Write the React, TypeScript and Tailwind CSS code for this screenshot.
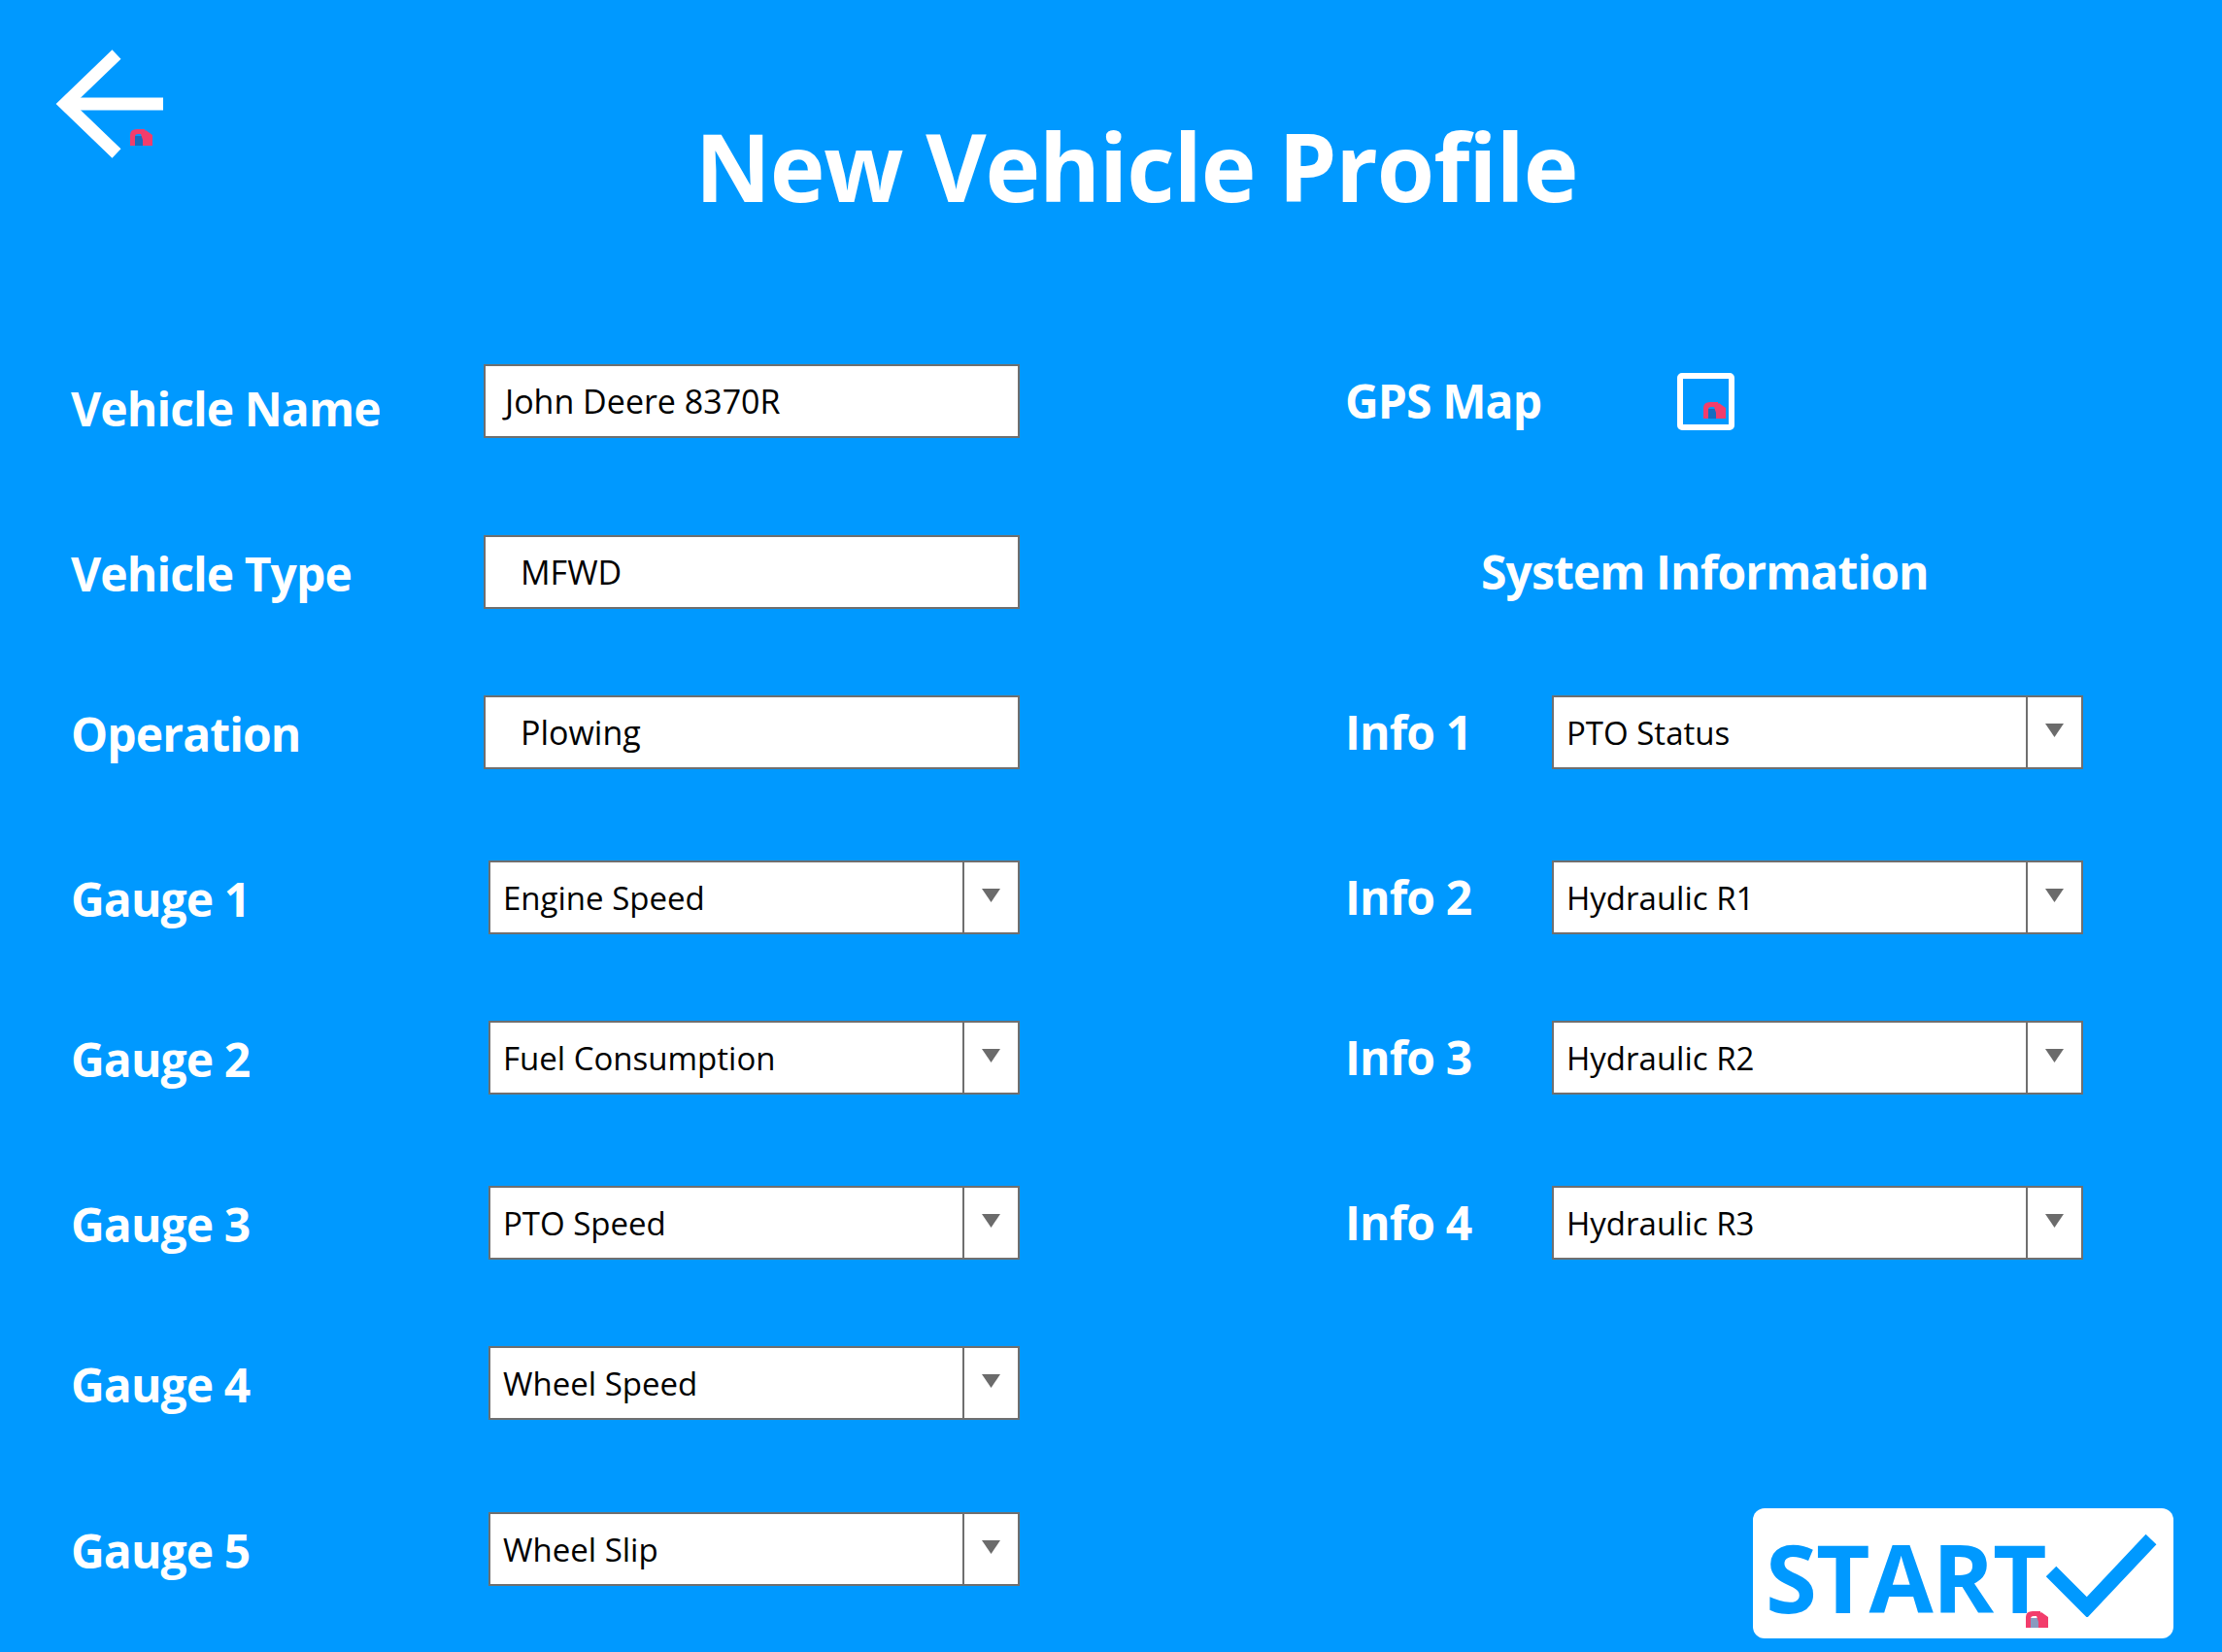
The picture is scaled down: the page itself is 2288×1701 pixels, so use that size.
import React from "react";

function Glyph({ className }: { className: string }) {
  return (
    <svg className={className} width="24" height="19" viewBox="0 0 24 19">
      <rect x="5" y="8" width="8" height="10" fill="#28478c" opacity="0.55" />
      <path d="M0 18 L0 7 Q0 1 7 1 L15 1 L15 6 L8 6 Q5 6 5 9 L5 18 Z" fill="#f23d6c" />
      <polygon points="11,6 16,2 23,7 23,18 13,18 13,12" fill="#f23d6c" />
    </svg>
  );
}

function TextBox({ value, padClass }: { value: string; padClass: string }) {
  return (
    <div className={`shrink-0 w-[552px] h-[76px] bg-white border-2 border-[#6f6f6f] flex items-center text-[34px] leading-none text-black ${padClass}`}>
      {value}
    </div>
  );
}

function Combo({ value, className }: { value: string; className: string }) {
  return (
    <div className={`shrink-0 flex h-[76px] w-[547px] bg-white border-2 border-[#6f6f6f] ${className}`}>
      <div className="flex-1 flex items-center pl-[13px] text-[33px] text-black leading-none">{value}</div>
      <div className="w-[57px] border-l-2 border-[#6f6f6f] flex items-start justify-center pt-[27px]">
        <svg width="19" height="14" viewBox="0 0 19 14">
          <polygon points="0,0 19,0 9.5,14" fill="#6b6b6b" />
        </svg>
      </div>
    </div>
  );
}

const label = "shrink-0 text-[48px] font-bold text-white leading-none tracking-[-0.9px]";

export default function App() {
  return (
    <div className="w-[2288px] h-[1701px] bg-[#0099ff] font-['Open_Sans',sans-serif] overflow-hidden flex flex-col">
      <div className="h-[375px] shrink-0 grid grid-cols-[200px_1fr_148px] items-start">
        <div className="relative ml-[52px] mt-[50px] w-[120px] h-[115px]">
          <svg width="120" height="115" viewBox="0 0 120 115">
            <polyline points="68,6 15,57 68,108" fill="none" stroke="white" strokeWidth="13" strokeLinejoin="miter" />
            <line x1="15" y1="57" x2="116" y2="57" stroke="white" strokeWidth="13" />
          </svg>
          <Glyph className="absolute left-[82px] top-[82px]" />
        </div>
        <h1 className="mt-[123px] text-center text-[96px] font-bold text-white leading-none tracking-[-1.1px]">New Vehicle Profile</h1>
        <div />
      </div>

      <div className="pl-[73px] flex flex-col">
        {/* Row 1 */}
        <div className="flex h-[76px] items-center">
          <div className={`${label} w-[425px] pt-[16px]`}>Vehicle Name</div>
          <TextBox value="John Deere 8370R" padClass="pl-[20px]" />
          <div className="shrink-0 w-[335px]" />
          <div className={`${label} w-[342px]`}>GPS Map</div>
          <div className="relative shrink-0 w-[59px] h-[59px] border-[6px] border-white rounded-[5px]">
            <Glyph className="absolute left-[21px] top-[23px]" />
          </div>
        </div>

        {/* Row 2 */}
        <div className="flex h-[76px] items-center mt-[100px]">
          <div className={`${label} w-[425px] pt-[4px]`}>Vehicle Type</div>
          <TextBox value="MFWD" padClass="pl-[36px]" />
          <div className="shrink-0 w-[335px]" />
          <div className={`${label} pl-[140px]`}>System Information</div>
        </div>

        {/* Row 3 */}
        <div className="flex h-[76px] items-center mt-[89px]">
          <div className={`${label} w-[425px] pt-[4px]`}>Operation</div>
          <TextBox value="Plowing" padClass="pl-[36px]" />
          <div className="shrink-0 w-[335px]" />
          <div className={`${label} w-[213px]`}>Info 1</div>
          <Combo value="PTO Status" className="" />
        </div>

        {/* Row 4 */}
        <div className="flex h-[76px] items-center mt-[94px]">
          <div className={`${label} w-[425px] pt-[4px]`}>Gauge 1</div>
          <Combo value="Engine Speed" className="ml-[5px]" />
          <div className="shrink-0 w-[335px]" />
          <div className={`${label} w-[213px]`}>Info 2</div>
          <Combo value="Hydraulic R1" className="" />
        </div>

        {/* Row 5 */}
        <div className="flex h-[76px] items-center mt-[89px]">
          <div className={`${label} w-[425px] pt-[4px]`}>Gauge 2</div>
          <Combo value="Fuel Consumption" className="ml-[5px]" />
          <div className="shrink-0 w-[335px]" />
          <div className={`${label} w-[213px]`}>Info 3</div>
          <Combo value="Hydraulic R2" className="" />
        </div>

        {/* Row 6 */}
        <div className="flex h-[76px] items-center mt-[94px]">
          <div className={`${label} w-[425px] pt-[4px]`}>Gauge 3</div>
          <Combo value="PTO Speed" className="ml-[5px]" />
          <div className="shrink-0 w-[335px]" />
          <div className={`${label} w-[213px]`}>Info 4</div>
          <Combo value="Hydraulic R3" className="" />
        </div>

        {/* Row 7 */}
        <div className="flex h-[76px] items-center mt-[89px]">
          <div className={`${label} w-[425px] pt-[4px]`}>Gauge 4</div>
          <Combo value="Wheel Speed" className="ml-[5px]" />
        </div>

        {/* Row 8 */}
        <div className="flex h-[76px] items-start mt-[95px]">
          <div className={`${label} w-[425px] self-center pt-[4px]`}>Gauge 5</div>
          <Combo value="Wheel Slip" className="ml-[5px]" />
          <div className="shrink-0 w-[755px]" />
          <div className="relative shrink-0 -mt-[4px] w-[433px] h-[134px] bg-white rounded-[12px] flex items-center pl-[13px]">
            <span className="text-[96px] font-bold text-[#0099ff] leading-none pt-[8px] tracking-[-1px]">START</span>
            <svg className="shrink-0" width="115" height="90" viewBox="0 0 115 90">
              <polyline points="5,43 42,80 108,10" fill="none" stroke="#0099ff" strokeWidth="15" strokeLinejoin="miter" />
            </svg>
            <Glyph className="absolute left-[281px] top-[105px]" />
          </div>
        </div>
      </div>
    </div>
  );
}
